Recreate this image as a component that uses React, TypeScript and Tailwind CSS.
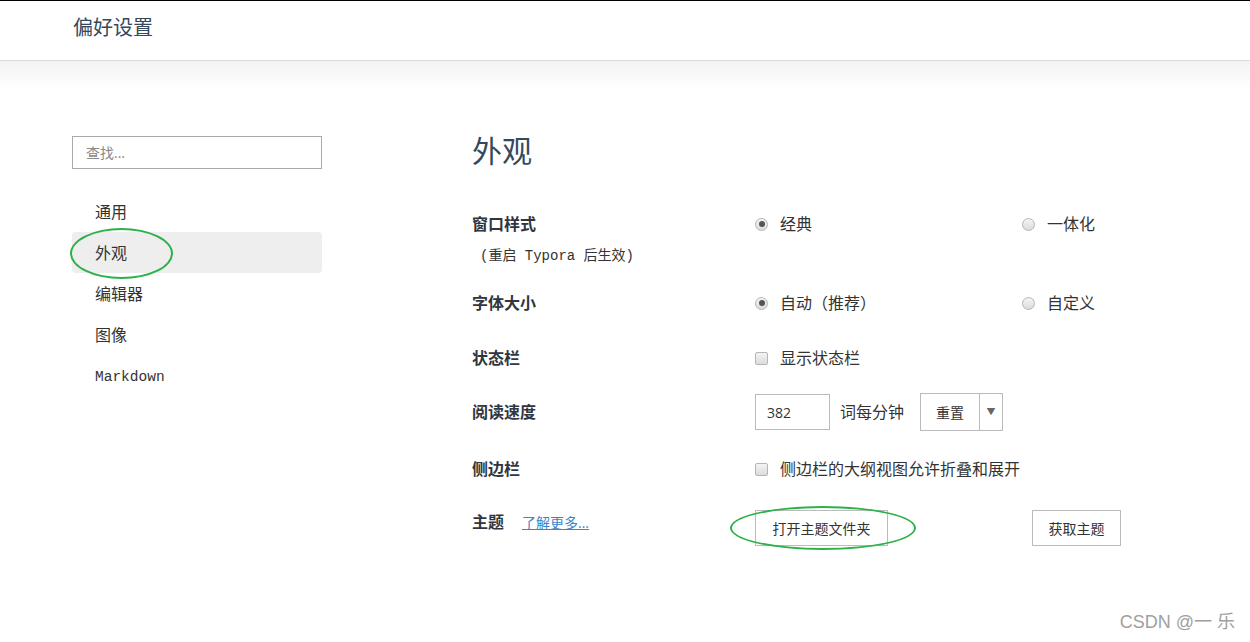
import React from 'react';

const sans = "font-['Open_Sans','Noto_Sans_CJK_SC',sans-serif]";
const mono = "font-['Liberation_Mono','Noto_Sans_CJK_SC',monospace]";

const navItems = ['通用', '外观', '编辑器', '图像', 'Markdown'];

function Radio({ checked }: { checked?: boolean }) {
  return (
    <span className="flex h-[13px] w-[13px] items-center justify-center rounded-full border border-[#b5b5b5] bg-gradient-to-b from-[#f4f4f4] to-[#dcdcdc]">
      {checked && <span className="h-[6px] w-[6px] rounded-full bg-[#555]" />}
    </span>
  );
}

function Checkbox() {
  return (
    <span className="h-[13px] w-[13px] rounded-[2px] border border-[#b5b5b5] bg-gradient-to-b from-[#f4f4f4] to-[#dcdcdc]" />
  );
}

function Option({ label, checked, box }: { label: string; checked?: boolean; box?: boolean }) {
  return (
    <div className="flex items-center gap-3">
      {box ? <Checkbox /> : <Radio checked={checked} />}
      <span className="text-[16px] text-[#333]">{label}</span>
    </div>
  );
}

function Label({ children }: { children: React.ReactNode }) {
  return <div className="w-[283px] shrink-0 text-[16px] font-bold leading-[28px] text-[#2f3640]">{children}</div>;
}

export default function App() {
  return (
    <div className={`relative h-[642px] w-[1250px] overflow-hidden bg-white ${sans}`}>
      <div className="h-px bg-black" />
      <header className="flex h-[60px] items-center border-b border-[#dcdcdc] pb-[6px] pl-[73px]">
        <h1 className="text-[20px] text-[#34495e]">偏好设置</h1>
      </header>
      <div className="h-[28px] bg-gradient-to-b from-[#f3f3f3] to-white" />

      <div className="flex">
        {/* sidebar */}
        <aside className="ml-[72px] w-[250px] shrink-0 pt-[47px]">
          <div className="flex h-[33px] items-center border border-[#a9a9a9] pl-[13px] text-[14px] text-[#888]">
            查找...
          </div>
          <nav className="mt-[22px]">
            {navItems.map((item) => (
              <div
                key={item}
                className={`relative flex h-[41px] items-center rounded-[4px] pl-[23px] text-[#333] ${
                  item === '外观' ? 'bg-[#eeeeee]' : ''
                } ${item === 'Markdown' ? `${mono} pt-[5px] text-[14.5px]` : 'text-[16px]'}`}
              >
                {item}
                {item === '外观' && (
                  <span className="absolute left-[-2px] top-[-4px] h-[51px] w-[103px] rounded-[50%] border-2 border-[#2db24a]" />
                )}
              </div>
            ))}
          </nav>
        </aside>

        {/* main */}
        <main className="ml-[150px] flex-1 pt-[40px]">
          <h2 className="text-[30px] leading-[44px] text-[#34495e]">外观</h2>

          <div className="mt-[37px] flex">
            <div className="w-[283px] shrink-0">
              <Label>窗口样式</Label>
              <div className={`mt-[8px] pl-[8px] text-[14px] leading-[20px] text-[#333] ${mono}`}>(重启 Typora 后生效)</div>
            </div>
            <div className="flex h-[28px] items-center">
              <div className="w-[267px]">
                <Option label="经典" checked />
              </div>
              <Option label="一体化" />
            </div>
          </div>

          <div className="mt-[23px] flex items-center">
            <Label>字体大小</Label>
            <div className="w-[267px]">
              <Option label="自动（推荐）" checked />
            </div>
            <Option label="自定义" />
          </div>

          <div className="mt-[27px] flex items-center">
            <Label>状态栏</Label>
            <Option label="显示状态栏" box />
          </div>

          <div className="mt-[20px] flex h-[40px] items-center">
            <Label>阅读速度</Label>
            <div className="flex h-[36px] w-[75px] items-center border border-[#bbb] pl-[11px] text-[14px] text-[#333]">382</div>
            <span className="ml-[10px] text-[16px] text-[#333]">词每分钟</span>
            <div className="ml-[16px] flex h-[38px] border border-[#bbb]">
              <span className="flex w-[59px] items-center justify-center border-r border-[#bbb] text-[14px] text-[#333]">重置</span>
              <span className="flex w-[22px] items-center justify-center text-[9px] text-[#666]">▼</span>
            </div>
          </div>

          <div className="mt-[23px] flex items-center">
            <Label>侧边栏</Label>
            <Option label="侧边栏的大纲视图允许折叠和展开" box />
          </div>

          <div className="mt-[25px] flex items-start">
            <div className="flex w-[283px] shrink-0 items-center">
              <span className="text-[16px] font-bold leading-[28px] text-[#2f3640]">主题</span>
              <a className="ml-[18px] text-[14px] text-[#4183c4] underline">了解更多...</a>
            </div>
            <div className="w-[277px]">
              <div className="relative mt-[2px] flex h-[36px] w-[133px] items-center justify-center border border-[#bbb] text-[14px] text-[#333]">
                打开主题文件夹
                <span className="absolute left-[-26px] top-[-5px] h-[44px] w-[186px] rounded-[50%] border-2 border-[#2db24a]" />
              </div>
            </div>
            <div className="mt-[2px] flex h-[36px] w-[89px] items-center justify-center border border-[#bbb] text-[14px] text-[#333]">
              获取主题
            </div>
          </div>
        </main>
      </div>

      <div className="absolute bottom-[6px] right-[15px] font-['Liberation_Sans','Noto_Sans_CJK_SC',sans-serif] text-[18px] text-[#a0a0a0]">
        CSDN @一 乐
      </div>
    </div>
  );
}
